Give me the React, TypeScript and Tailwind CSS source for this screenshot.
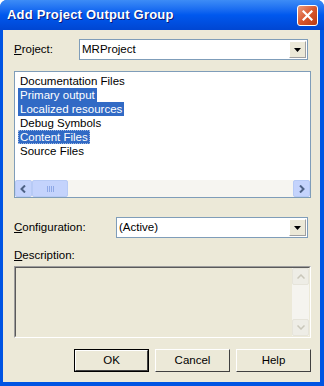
import React from 'react';

const items = [
  { label: 'Documentation Files', selected: false },
  { label: 'Primary output', selected: true },
  { label: 'Localized resources', selected: true },
  { label: 'Debug Symbols', selected: false },
  { label: 'Content Files', selected: true, focus: true },
  { label: 'Source Files', selected: false },
];

function DropArrow() {
  return (
    <div className="w-[17px] h-[17px] bg-[#ECE9D8] border border-t-white border-l-white border-b-[#A0A0A0] border-r-[#A0A0A0] flex items-center justify-center">
      <svg width="7" height="4" viewBox="0 0 7 4">
        <path d="M0 0h7L3.5 4z" fill="#000" />
      </svg>
    </div>
  );
}

function Combo({ value, width }: { value: string; width: string }) {
  return (
    <div className={`${width} h-[21px] bg-white border border-[#7F9DB9] flex items-center justify-between pl-[2px] pr-[1px]`}>
      <span className="text-[11.5px] text-black">{value}</span>
      <DropArrow />
    </div>
  );
}

function ScrollBtn({ dir }: { dir: 'left' | 'right' }) {
  return (
    <div className="w-[17px] h-[17px] rounded-[2px] bg-[#C4D3FC] border border-[#B7CAF5] flex items-center justify-center">
      <svg width="7" height="8" viewBox="0 0 7 8">
        {dir === 'left' ? (
          <path d="M5 0.5L1.5 4 5 7.5" stroke="#4D6185" strokeWidth="2" fill="none" />
        ) : (
          <path d="M2 0.5L5.5 4 2 7.5" stroke="#4D6185" strokeWidth="2" fill="none" />
        )}
      </svg>
    </div>
  );
}

function Button({ label, isDefault }: { label: string; isDefault?: boolean }) {
  return (
    <div className={`w-[75px] h-[23px] ${isDefault ? 'border border-black' : ''}`}>
      <div className="w-full h-full bg-[#ECE9D8] border border-t-white border-l-white border-b-[#404040] border-r-[#404040] flex items-center justify-center">
        <span className="text-[11.5px] text-black">{label}</span>
      </div>
    </div>
  );
}

export default function App() {
  return (
    <div
      className="w-[324px] h-[386px] flex flex-col bg-[#0054E3] rounded-t-[7px] overflow-hidden"
      style={{ fontFamily: '"Liberation Sans", Arial, sans-serif' }}
    >
      {/* Title bar */}
      <div className="h-[30px] shrink-0 flex items-center justify-between pl-[7px] pr-[6px] bg-gradient-to-b from-[#3D8CF6] via-[#0058EE] to-[#0046D2]">
        <span className="text-[13px] font-bold text-white tracking-[0.2px] [text-shadow:1px_1px_0_#0A1A7A]">
          Add Project Output Group
        </span>
        <div className="w-[21px] h-[21px] rounded-[3px] border border-white bg-gradient-to-br from-[#E99A7C] via-[#D9562C] to-[#B93A12] flex items-center justify-center">
          <svg width="11" height="11" viewBox="0 0 11 11">
            <path d="M1.5 1.5l8 8M9.5 1.5l-8 8" stroke="#fff" strokeWidth="2.2" strokeLinecap="square" />
          </svg>
        </div>
      </div>

      {/* Client area */}
      <div className="flex-1 ml-[3px] mr-[4px] mb-[4px] bg-[#ECE9D8] flex flex-col pl-[11px] text-black">
        {/* Project row */}
        <div className="mt-[9px] flex items-center h-[21px]">
          <span className="w-[65px] text-[11.5px]">
            <span className="underline">P</span>roject:
          </span>
          <Combo value="MRProject" width="w-[229px]" />
        </div>

        {/* Output list */}
        <div className="mt-[11px] w-[297px] h-[127px] bg-white border border-[#7F9DB9] flex flex-col">
          <div className="flex-1 pt-[2px] pl-[3px] flex flex-col items-start">
            {items.map((it) => (
              <div
                key={it.label}
                className={`h-[14px] leading-[14px] px-[2px] text-[11.5px] ${
                  it.selected ? 'bg-[#316AC5] text-white' : 'text-black'
                } ${it.focus ? 'outline outline-1 outline-dotted outline-[#9BB5E0] -outline-offset-1' : ''}`}
              >
                {it.label}
              </div>
            ))}
          </div>
          <div className="h-[17px] bg-[#F6F5F1] flex items-center justify-between">
            <div className="flex items-center">
              <ScrollBtn dir="left" />
              <div className="w-[36px] h-[17px] rounded-[2px] bg-[#C4D3FC] border border-[#B7CAF5] flex items-center justify-center gap-[1px]">
                {[0, 1, 2, 3].map((i) => (
                  <div key={i} className="w-[1px] h-[6px] bg-[#8EA8E6]" />
                ))}
              </div>
            </div>
            <ScrollBtn dir="right" />
          </div>
        </div>

        {/* Configuration row */}
        <div className="mt-[19px] flex items-center h-[21px]">
          <span className="w-[102px] text-[11.5px]">
            <span className="underline">C</span>onfiguration:
          </span>
          <Combo value="(Active)" width="w-[192px]" />
        </div>

        {/* Description */}
        <div className="mt-[11px] text-[11.5px] h-[13px] leading-[13px]">
          <span className="underline">D</span>escription:
        </div>
        <div className="mt-[4px] w-[297px] h-[72px] border border-t-[#9D9D9D] border-l-[#9D9D9D] border-b-white border-r-white">
          <div className="w-full h-full border border-t-[#5A5A5A] border-l-[#5A5A5A] border-b-[#ECE9D8] border-r-[#ECE9D8] flex justify-end">
            <div className="w-[17px] h-full bg-[#F5F4EF] flex flex-col justify-between">
              <div className="w-[17px] h-[17px] rounded-[2px] border border-[#E6E4DA] bg-[#EEEDE6] flex items-center justify-center">
                <svg width="8" height="5" viewBox="0 0 8 5">
                  <path d="M0.5 4.5L4 1l3.5 3.5" stroke="#C9C7BA" strokeWidth="1.5" fill="none" />
                </svg>
              </div>
              <div className="w-[17px] h-[17px] rounded-[2px] border border-[#E6E4DA] bg-[#EEEDE6] flex items-center justify-center">
                <svg width="8" height="5" viewBox="0 0 8 5">
                  <path d="M0.5 0.5L4 4l3.5-3.5" stroke="#C9C7BA" strokeWidth="1.5" fill="none" />
                </svg>
              </div>
            </div>
          </div>
        </div>

        {/* Buttons */}
        <div className="mt-[11px] w-[297px] flex justify-end gap-[6px]">
          <Button label="OK" isDefault />
          <Button label="Cancel" />
          <Button label="Help" />
        </div>
      </div>
    </div>
  );
}
